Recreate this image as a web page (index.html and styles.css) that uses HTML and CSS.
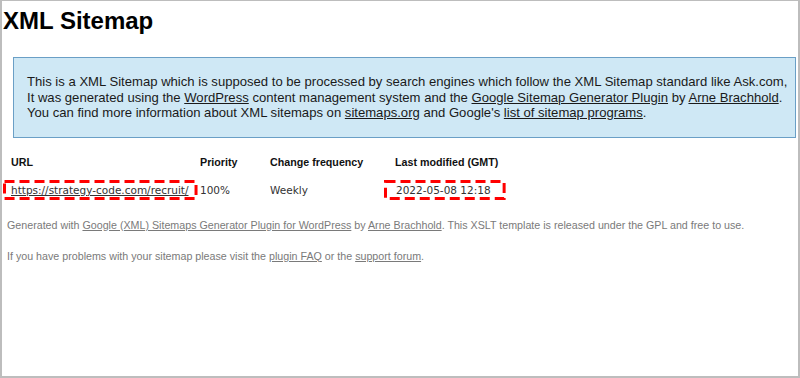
FILE: index.html
```html
<!DOCTYPE html>
<html>
<head>
<meta charset="utf-8">
<title>XML Sitemap</title>
<link rel="stylesheet" href="styles.css">
</head>
<body>
<div class="frame">
  <h1 class="title">XML Sitemap</h1>
  <div class="intro">
    <p>This is a XML Sitemap which is supposed to be processed by search engines which follow the XML Sitemap standard like Ask.com,<br>
    It was generated using the <a href="#">WordPress</a> content management system and the <a href="#">Google Sitemap Generator Plugin</a> by <a href="#">Arne Brachhold</a>.<br>
    You can find more information about XML sitemaps on <a href="#">sitemaps.org</a> and Google's <a href="#">list of sitemap programs</a>.</p>
  </div>
  <div class="table">
    <div class="th">URL</div>
    <div class="th">Priority</div>
    <div class="th">Change frequency</div>
    <div class="th">Last modified (GMT)</div>
    <div class="td"><span class="mark mark-url"><a href="#">https://strategy-code.com/recruit/</a><svg class="dash" aria-hidden="true"><rect></rect></svg></span></div>
    <div class="td">100%</div>
    <div class="td">Weekly</div>
    <div class="td"><span class="mark mark-date">2022-05-08 12:18<svg class="dash" aria-hidden="true"><rect></rect></svg></span></div>
  </div>
  <p class="foot foot-first">Generated with <a href="#">Google (XML) Sitemaps Generator Plugin for WordPress</a> by <a href="#">Arne Brachhold</a>. This XSLT template is released under the GPL and free to use.</p>
  <p class="foot">If you have problems with your sitemap please visit the <a href="#">plugin FAQ</a> or the <a href="#">support forum</a>.</p>
</div>
</body>
</html>
```
FILE: styles.css
```css
html, body {
  margin: 0;
  padding: 0;
  background: #fff;
}
.frame {
  box-sizing: border-box;
  width: 800px;
  height: 378px;
  border-top: 1px solid #bdbdbd;
  border-left: 2px solid #bdbdbd;
  border-right: 2px solid #bdbdbd;
  border-bottom: 2px solid #bdbdbd;
  font-family: "Liberation Sans", Arial, sans-serif;
  overflow: hidden;
}
.title {
  margin: 0;
  padding: 6px 0 0 1px;
  font-size: 24px;
  line-height: 28px;
  font-weight: bold;
  color: #000;
}
.intro {
  margin: 22px 2px 0 11px;
  background: #cfe8f5;
  border: 1px solid #6a9fc6;
  padding: 16px 4px 16px 13px;
}
.intro p {
  margin: 0;
  font-size: 13.1px;
  line-height: 15.5px;
  color: #1a1a1a;
  white-space: nowrap;
}
.intro a {
  color: #1a1a1a;
  text-decoration: underline;
}
.table {
  display: grid;
  grid-template-columns: 189px 70px 125px 1fr;
  grid-template-rows: 20px 20px;
  row-gap: 8px;
  margin: 14px 0 0 9px;
  font-size: 10.7px;
  line-height: 14px;
  color: #222;
}
.th {
  font-weight: bold;
  display: flex;
  align-items: center;
  color: #111;
}
.td {
  display: flex;
  align-items: center;
  color: #333;
  font-family: "DejaVu Sans", Verdana, sans-serif;
  font-size: 10.5px;
  white-space: nowrap;
}
.td a {
  color: #333;
}
.mark {
  position: relative;
  display: inline-block;
  padding-top: 3px;
  padding-bottom: 3px;
  line-height: 14px;
}
.dash {
  position: absolute;
  left: 0;
  top: 0;
  width: 100%;
  height: 100%;
  overflow: visible;
}
.dash rect {
  x: 1.5px;
  y: 1.5px;
  width: calc(100% - 3px);
  height: calc(100% - 3px);
  fill: none;
  stroke: #f00;
  stroke-width: 3px;
  stroke-dasharray: 10 5;
}
.mark-url {
  margin-left: -8px;
  padding-left: 8px;
  padding-right: 9px;
}
.mark-date {
  margin-left: -11px;
  padding-left: 12px;
  padding-right: 15px;
}
.foot {
  margin: 17px 0 0 5px;
  font-size: 10.7px;
  line-height: 14px;
  color: #7a7a7a;
}
.foot-first {
  margin-top: 18px;
}
.foot a {
  color: #7a7a7a;
}
```
